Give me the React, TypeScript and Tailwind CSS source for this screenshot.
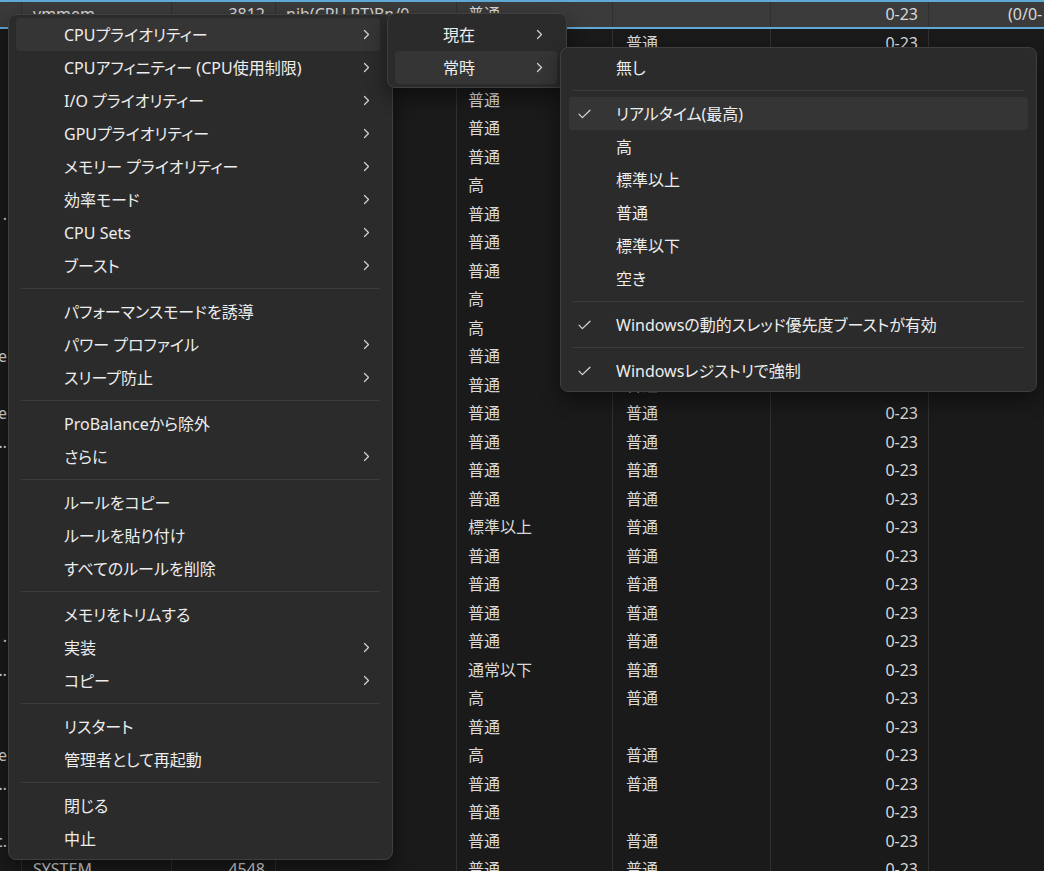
import React from 'react';

type Item = { label: string; sub?: boolean; active?: boolean; checked?: boolean } | 'sep';

const Chevron = () => (
  <svg width="7" height="11" viewBox="0 0 7 11" fill="none" className="text-[#d4d4d4] shrink-0">
    <path d="M1.5 1.5 5.5 5.5 1.5 9.5" stroke="currentColor" strokeWidth="1.2" strokeLinecap="round" strokeLinejoin="round" />
  </svg>
);

const Check = () => (
  <svg width="13" height="10" viewBox="0 0 13 10" fill="none" className="text-[#d8d8d8]">
    <path d="M1 5.2 4.4 8.6 12 1.2" stroke="currentColor" strokeWidth="1.2" strokeLinecap="round" strokeLinejoin="round" />
  </svg>
);

const mainItems: Item[] = [
  { label: 'CPUプライオリティー', sub: true, active: true },
  { label: 'CPUアフィニティー (CPU使用制限)', sub: true },
  { label: 'I/O プライオリティー', sub: true },
  { label: 'GPUプライオリティー', sub: true },
  { label: 'メモリー プライオリティー', sub: true },
  { label: '効率モード', sub: true },
  { label: 'CPU Sets', sub: true },
  { label: 'ブースト', sub: true },
  'sep',
  { label: 'パフォーマンスモードを誘導' },
  { label: 'パワー プロファイル', sub: true },
  { label: 'スリープ防止', sub: true },
  'sep',
  { label: 'ProBalanceから除外' },
  { label: 'さらに', sub: true },
  'sep',
  { label: 'ルールをコピー' },
  { label: 'ルールを貼り付け' },
  { label: 'すべてのルールを削除' },
  'sep',
  { label: 'メモリをトリムする' },
  { label: '実装', sub: true },
  { label: 'コピー', sub: true },
  'sep',
  { label: 'リスタート' },
  { label: '管理者として再起動' },
  'sep',
  { label: '閉じる' },
  { label: '中止' },
];

const priorityItems: Item[] = [
  { label: '無し' },
  'sep',
  { label: 'リアルタイム(最高)', checked: true, active: true },
  { label: '高' },
  { label: '標準以上' },
  { label: '普通' },
  { label: '標準以下' },
  { label: '空き' },
  'sep',
  { label: 'Windowsの動的スレッド優先度ブーストが有効', checked: true },
  'sep',
  { label: 'Windowsレジストリで強制', checked: true },
];

// column 4 / column 5 values, row 0 is the selected row
const prio = [
  '普通', '普通', '普通', '普通', '普通', '普通', '高', '普通', '普通', '普通', '高', '高', '普通', '普通',
  '普通', '普通', '普通', '普通', '標準以上', '普通', '普通', '普通', '普通', '通常以下', '高', '普通', '高', '普通', '普通', '普通', '普通',
];
const io = [
  '', '普通', '普通', '普通', '普通', '普通', '普通', '普通', '普通', '普通', '普通', '普通', '普通', '普通',
  '普通', '普通', '普通', '普通', '普通', '普通', '普通', '普通', '普通', '普通', '普通', '', '普通', '普通', '', '普通', '普通',
];
const edge: Record<number, string> = { 7: 'Host .', 12: 'Service', 14: 'Service', 15: 'Broker…', 22: 'Runtime ·', 23: 'Runtime…', 26: 'Service', 27: 'Runtime…', 29: 'Svc.' };

const App: React.FC = () => {
  return (
    <div className="relative w-[1044px] h-[871px] overflow-hidden bg-[#1a1a1a] text-[16px] font-['Noto_Sans','Noto_Sans_CJK_JP',sans-serif] [font-feature-settings:'palt']">
      {/* process table behind the menus */}
      <div className="flex flex-col text-[#d8d8d8]">
        {prio.map((p, i) => (
          <div
            key={i}
            className={
              i === 0
                ? 'flex h-[28.5px] shrink-0 bg-[#3b3b3b] border-y-2 border-[#5fa9d6]'
                : 'flex h-[28.5px] shrink-0'
            }
          >
            <div className="w-[22px] shrink-0 border-r border-[#2e3034] flex items-center justify-end overflow-hidden whitespace-nowrap pr-[14px]">
              {edge[i] ?? ''}
            </div>
            <div className="w-[150px] shrink-0 border-r border-[#2e3034] flex items-center pl-[11px] whitespace-nowrap overflow-hidden">
              {i === 0 ? 'vmmem' : i === 30 ? 'SYSTEM' : ''}
            </div>
            <div className="w-[104px] shrink-0 border-r border-[#2e3034] flex items-center justify-end pr-[10px]">
              {i === 0 ? '3812' : i === 30 ? '4548' : ''}
            </div>
            <div className="w-[181px] shrink-0 border-r border-[#2e3034] flex items-center pl-[10px] whitespace-nowrap overflow-hidden">
              {i === 0 ? 'nib(CPU RT)Bn/0' : ''}
            </div>
            <div className="w-[156px] shrink-0 border-r border-[#2e3034] flex items-center pl-[11px]">{p}</div>
            <div className="w-[158px] shrink-0 border-r border-[#2e3034] flex items-center pl-[13px]">{io[i]}</div>
            <div className="w-[158px] shrink-0 border-r border-[#2e3034] flex items-center justify-end pr-[10px]">0-23</div>
            <div className="flex-1 flex items-center pl-[79px] whitespace-nowrap">{i === 0 ? '(0/0-' : ''}</div>
          </div>
        ))}
      </div>

      {/* main context menu */}
      <div className="absolute left-[8px] top-[14px] w-[385px] rounded-[8px] border border-[#3f3f3f] bg-[#2b2b2b] pl-[7px] pr-[12px] pt-[3px] pb-[4px] text-[#ededed] shadow-[0_8px_20px_rgba(0,0,0,0.45)]">
        {mainItems.map((it, i) =>
          it === 'sep' ? (
            <div key={i} className="h-[13px] flex items-center pl-[5px]">
              <div className="h-px w-full bg-[#3c3c3c]" />
            </div>
          ) : (
            <div
              key={i}
              className={
                it.active
                  ? 'h-[33px] flex items-center pl-[48px] pr-[10px] rounded-[4px] bg-[#353535]'
                  : 'h-[33px] flex items-center pl-[48px] pr-[10px]'
              }
            >
              <span className="flex-1 whitespace-nowrap">{it.label}</span>
              {it.sub && <Chevron />}
            </div>
          )
        )}
      </div>

      {/* first submenu */}
      <div className="absolute left-[387px] top-[13px] w-[180px] rounded-[8px] border border-[#3f3f3f] bg-[#2b2b2b] pl-[7px] pr-[9px] pt-[4px] pb-[3px] text-[#ededed] shadow-[0_8px_20px_rgba(0,0,0,0.45)]">
        <div className="h-[33px] flex items-center pl-[48px] pr-[14px]">
          <span className="flex-1">現在</span>
          <Chevron />
        </div>
        <div className="h-[33px] flex items-center pl-[48px] pr-[14px] rounded-[4px] bg-[#353535]">
          <span className="flex-1">常時</span>
          <Chevron />
        </div>
      </div>

      {/* priority submenu */}
      <div className="absolute left-[560px] top-[47px] w-[477px] rounded-[8px] border border-[#3f3f3f] bg-[#2b2b2b] px-[8px] pt-[3px] pb-[4px] text-[#ededed] shadow-[0_8px_20px_rgba(0,0,0,0.45)]">
        {priorityItems.map((it, i) =>
          it === 'sep' ? (
            <div key={i} className="h-[13px] flex items-center px-[4px]">
              <div className="h-px w-full bg-[#3c3c3c]" />
            </div>
          ) : (
            <div
              key={i}
              className={
                it.active
                  ? 'h-[33px] flex items-center rounded-[4px] bg-[#353535]'
                  : 'h-[33px] flex items-center'
              }
            >
              <span className="w-[47px] shrink-0 pl-[9px] flex items-center">{it.checked && <Check />}</span>
              <span className="whitespace-nowrap">{it.label}</span>
            </div>
          )
        )}
      </div>
    </div>
  );
};

export default App;
